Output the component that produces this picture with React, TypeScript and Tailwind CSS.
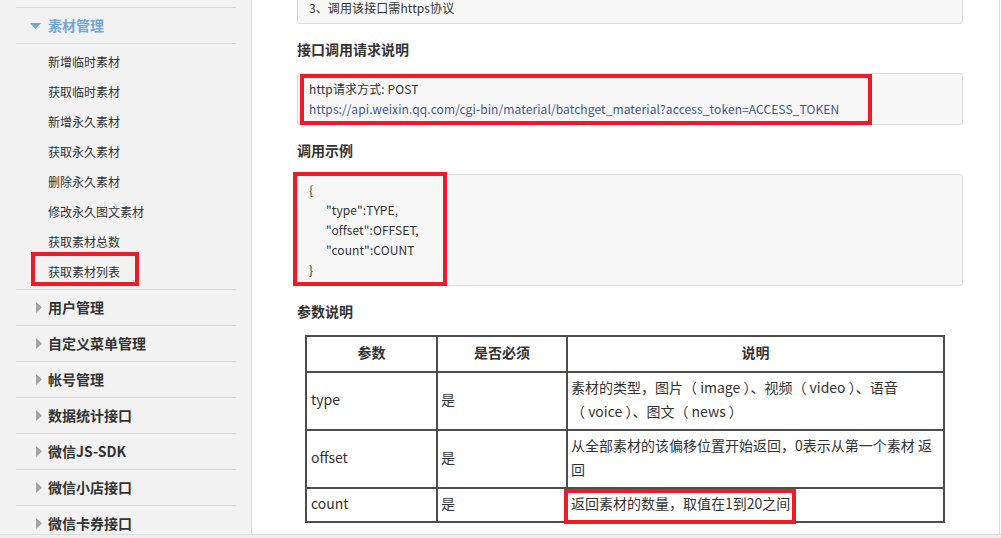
import React from 'react';

const subItems = [
  '新增临时素材',
  '获取临时素材',
  '新增永久素材',
  '获取永久素材',
  '删除永久素材',
  '修改永久图文素材',
  '获取素材总数',
  '获取素材列表',
];

const mainItems = ['用户管理', '自定义菜单管理', '帐号管理', '数据统计接口', '微信JS-SDK', '微信小店接口', '微信卡券接口'];

const RightArrow = () => (
  <svg width="6" height="11" viewBox="0 0 6 11" className="absolute left-[20px] top-[12px]">
    <path d="M0 0 L6 5.5 L0 11 Z" fill="#a3a3a3" />
  </svg>
);

const Sidebar: React.FC = () => (
  <aside className="h-full w-[252px] shrink-0 border-r border-[#d9d9d9] bg-[#f2f2f2] pl-4 pr-[15px] pt-[7px]">
    <div className="relative flex h-[37px] items-center border-y border-[#d9d9d9] pl-[32px] text-[14px] font-bold text-[#72a7d9]">
      <svg width="11" height="6" viewBox="0 0 11 6" className="absolute left-[14px] top-[15px]">
        <path d="M0 0 L11 0 L5.5 6 Z" fill="#72a7d9" />
      </svg>
      素材管理
    </div>
    <div className="border-b border-[#d9d9d9] pb-[2px] pt-[3px]">
      {subItems.map(s => (
        <div key={s} className="flex h-[30px] items-center pl-[32px] text-[12px] text-[#333]">
          {s}
        </div>
      ))}
    </div>
    {mainItems.map(m => (
      <div key={m} className="relative flex h-[36px] items-center border-b border-[#d9d9d9] pl-[32px] text-[14px] font-bold text-[#333]">
        <RightArrow />
        {m}
      </div>
    ))}
  </aside>
);

const Box: React.FC<{ children: React.ReactNode; className?: string }> = ({ children, className = '' }) => (
  <div className={`rounded-[3px] border border-[#dcdcdc] bg-[#f7f7f7] px-[11px] py-[5px] text-[12px] leading-[20px] tracking-[0.1px] text-[#333] ${className}`}>
    {children}
  </div>
);

const Heading: React.FC<{ children: React.ReactNode }> = ({ children }) => (
  <h3 className="mb-[14px] mt-[15px] text-[14px] font-bold leading-[20px] text-[#333]">{children}</h3>
);

const rows = [
  { name: 'type', req: '是', desc: <>素材的类型，图片（ image ）、视频（ video ）、语音<br />（ voice ）、图文（ news ）</>, h: 'h-[58px]' },
  { name: 'offset', req: '是', desc: <>从全部素材的该偏移位置开始返回，0表示从第一个素材 返<br />回</>, h: 'h-[58px]' },
  { name: 'count', req: '是', desc: <>返回素材的数量，取值在1到20之间</>, h: 'h-[34px]' },
];

export default function App() {
  return (
    <div className="relative flex h-[538px] w-[1001px] flex-col overflow-hidden bg-white font-['Noto_Sans_CJK_SC',sans-serif]">
      <div className="flex h-[534px]">
        <Sidebar />
        <main className="w-[748px] border-r border-[#dcdcdc] pl-[45px] pr-[36px]">
          <Box className="-mt-[8px]">3、调用该接口需https协议</Box>
          <Heading>接口调用请求说明</Heading>
          <Box>
            <div>http请求方式: POST</div>
            <div className="text-[#3f5a8f]">https://api.weixin.qq.com/cgi-bin/material/batchget_material?access_token=ACCESS_TOKEN</div>
          </Box>
          <Heading>调用示例</Heading>
          <Box>
            <div>{'{'}</div>
            <div className="pl-[17px]">"type":TYPE,</div>
            <div className="pl-[17px]">"offset":OFFSET,</div>
            <div className="pl-[17px]">"count":COUNT</div>
            <div>{'}'}</div>
          </Box>
          <Heading>参数说明</Heading>
          <table className="ml-[8px] border-separate border-spacing-0 border-l-2 border-t-2 border-[#4d4d4d] text-[14px] leading-[24px] text-[#333]">
            <thead>
              <tr className="h-[36px]">
                <th className="w-[131px] border-b-2 border-r-2 border-[#4d4d4d] pb-[5px] font-bold">参数</th>
                <th className="w-[130px] border-b-2 border-r-2 border-[#4d4d4d] pb-[5px] font-bold">是否必须</th>
                <th className="w-[377px] border-b-2 border-r-2 border-[#4d4d4d] pb-[5px] font-bold">说明</th>
              </tr>
            </thead>
            <tbody>
              {rows.map(r => (
                <tr key={r.name} className={r.h}>
                  <td className="border-b-2 border-r-2 border-[#4d4d4d] px-[4px] pb-[4px] align-middle">{r.name}</td>
                  <td className="border-b-2 border-r-2 border-[#4d4d4d] px-[3px] pb-[4px] align-middle">{r.req}</td>
                  <td className="border-b-2 border-r-2 border-[#4d4d4d] px-[3px] pb-[4px] align-middle">{r.desc}</td>
                </tr>
              ))}
            </tbody>
          </table>
        </main>
      </div>
      <div className="h-[4px] border-t border-[#dcdcdc] bg-[#f0f0f0]" />

      {/* red annotation boxes */}
      <div className="absolute left-[31px] top-[252px] h-[34px] w-[108px] border-4 border-[#ed1c24]" />
      <div className="absolute left-[300px] top-[74px] h-[51px] w-[572px] border-4 border-[#ed1c24]" />
      <div className="absolute left-[293px] top-[172px] h-[114px] w-[154px] border-4 border-[#ed1c24]" />
      <div className="absolute left-[564px] top-[489px] h-[35px] w-[232px] border-4 border-[#ed1c24]" />
    </div>
  );
}
